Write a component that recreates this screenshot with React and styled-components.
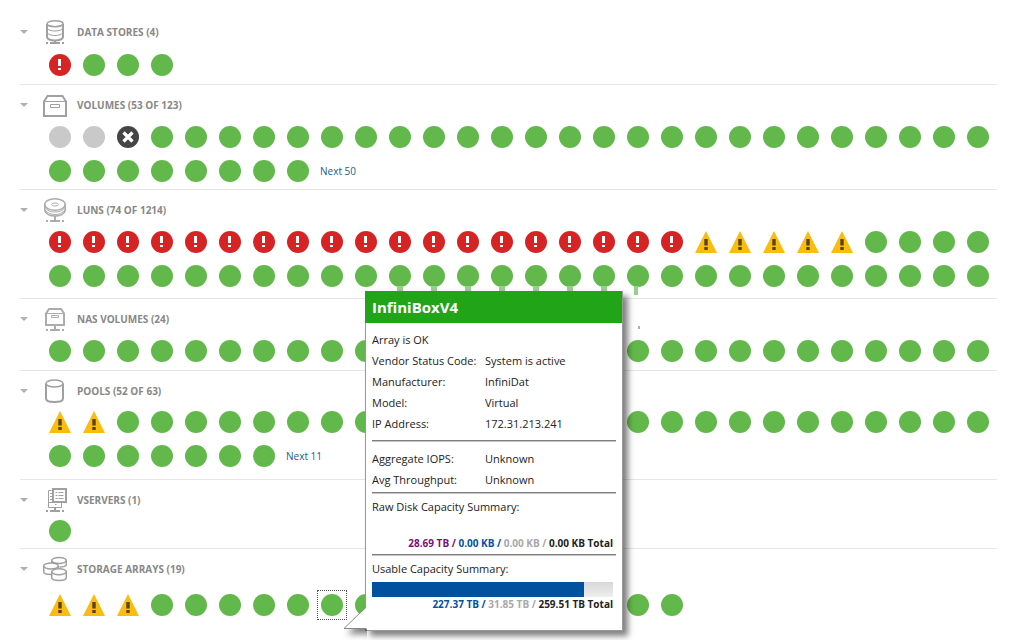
import React, { useState } from "react";
import styled, { createGlobalStyle } from "styled-components";

const GlobalStyle = createGlobalStyle`
  * {
    box-sizing: border-box;
  }
  body {
    margin: 0;
    background: #ffffff;
    color: #222222;
    font-family: "Open Sans", "Noto Sans", sans-serif;
    font-size: 11px;
  }
`;

const Page = styled.main`
  min-height: 100vh;
  padding: 12px 27px 0 20px;
`;

const Section = styled.section`
  padding-bottom: ${(props) => props.$tail}px;
  border-bottom: ${(props) => (props.$last ? "none" : "1px solid #e6e6e6")};
`;

const SectionHeader = styled.header`
  display: flex;
  align-items: center;
  height: 34px;
  padding-top: 6px;
`;

const Toggle = styled.button`
  display: flex;
  width: 23px;
  padding: 0;
  border: none;
  background: none;
  cursor: pointer;
`;

const SectionIcon = styled.svg`
  width: 24px;
  height: 26px;
  margin-right: 10px;
  fill: none;
  stroke: #a0a0a0;
`;

const SectionTitle = styled.h2`
  margin: 0;
  color: #888888;
  font-size: 10px;
  font-weight: 700;
  text-transform: uppercase;
`;

const Tiles = styled.div`
  display: flex;
  flex-wrap: wrap;
  align-items: center;
  padding: ${(props) => props.$lead}px 0 0 23px;
`;

const TileCell = styled.div`
  position: relative;
  display: flex;
  align-items: center;
  justify-content: center;
  width: 34px;
  height: 34px;
`;

const Tile = styled.button`
  display: flex;
  align-items: center;
  justify-content: center;
  width: 30px;
  height: 30px;
  padding: 0;
  border: 1px dotted ${(props) => (props.$selected ? "#555555" : "transparent")};
  background: none;
  cursor: pointer;
`;

const Stem = styled.span`
  position: absolute;
  bottom: ${(props) => (props.$long ? "-2px" : "0")};
  left: ${(props) => (props.$long ? "13px" : "14px")};
  width: ${(props) => (props.$long ? "4px" : "6px")};
  height: ${(props) => (props.$long ? "9px" : "7px")};
  background: #98cf8a;
`;

const Speck = styled.span`
  position: absolute;
  top: -8px;
  left: 17px;
  width: 2px;
  height: 3px;
  background: #b0b0b0;
`;

const NextLink = styled.a`
  margin-left: 5px;
  color: #1a5c8e;
  font-size: 10px;
  text-decoration: none;
`;

const Popup = styled.aside`
  position: absolute;
  bottom: -9px;
  left: 50px;
  z-index: 1;
  width: 258px;
  border: 1px solid #999999;
  border-top: none;
  background: #ffffff;
  box-shadow: 5px 5px 6px rgba(0, 0, 0, 0.5);
`;

const PopupTitle = styled.h3`
  margin: 0 0 0 -1px;
  padding: 0 7px;
  background: #22a418;
  color: #ffffff;
  font-size: 15px;
  line-height: 32px;
`;

const PopupBody = styled.div`
  padding: 6px 6px 18px;
  line-height: 21px;
`;

const Line = styled.p`
  margin: 0;
`;

const Details = styled.dl`
  display: grid;
  grid-template-columns: 113px 1fr;
  margin: 0;

  dd {
    margin: 0;
  }
`;

const Rule = styled.hr`
  height: 2px;
  margin: ${(props) => props.$above}px 0 ${(props) => props.$below}px;
  border: none;
  border-top: 1px solid #808080;
  border-bottom: 1px solid #c4c4c4;
`;

const Meter = styled.div`
  height: 15px;
  margin: 3px 3px 0 0;
  background: linear-gradient(#d8d8d8, #eeeeee);
`;

const MeterFill = styled.div`
  height: 100%;
  background: #00529f;
`;

const Totals = styled.p`
  margin: ${(props) => props.$above}px 3px 0 0;
  font-size: 10px;
  font-weight: 700;
  line-height: 15px;
  text-align: right;
`;

const Amount = styled.span`
  color: ${(props) => props.$color};
`;

const PopupTail = styled.svg`
  position: absolute;
  bottom: 0;
  left: -23px;
  width: 24px;
  height: 24px;
  overflow: visible;
  filter: drop-shadow(4px 5px 3px rgba(0, 0, 0, 0.5));
  clip-path: inset(0 0 -14px -6px);
`;

const icons = {
  datastore: (
    <>
      <ellipse cx="12" cy="4.700" rx="8" ry="3" strokeWidth="1.500" />
      <path d="M4 5V18C4 20 7.500 21.500 12 21.500S20 20 20 18V5" strokeWidth="2" />
      <path d="M4 9C5 11 8 12 12 12S19 11 20 9M4 13.500C5 15.500 8 16.500 12 16.500S19 15.500 20 13.500" />
      <path d="M12 21.500V24M3 24H5M7 24H17M19 24H21" strokeWidth="2" />
    </>
  ),
  volume: (
    <>
      <path d="M1 9.500V24H23V9.500L19.500 4H4.500Z" strokeWidth="2" />
      <path d="M1 9.500H23" strokeWidth="1" />
      <path d="M7.500 12.500H16.500V15.500H7.500Z" />
    </>
  ),
  lun: (
    <g stroke="#acacac">
      <ellipse cx="12" cy="7.500" rx="10.200" ry="5.800" strokeWidth="1.500" />
      <ellipse cx="12" cy="7.500" rx="3.500" ry="1.500" />
      <path d="M1.800 7.500V13.500C2.500 17 7 19 12 19S21.500 17 22.200 13.500V7.500" strokeWidth="1.500" />
      <path d="M2 10.500C4 14 8 15 12 15S20 14 22 10.500M2 13C4 16 8 17.500 12 17.500S20 16 22 13" />
      <path d="M12 19V24M3 24H5M7 24H17M19 24H21" strokeWidth="2" />
    </g>
  ),
  nas: (
    <g stroke="#acacac">
      <path d="M3 7.500V19H21V7.500L18 3H6Z" strokeWidth="2" />
      <path d="M3 7.500H21M8.500 9.500H15.500V11.500H8.500Z" />
      <path d="M12 20V24M3 24H5M7 24H17M19 24H21" strokeWidth="2" />
    </g>
  ),
  pool: (
    <>
      <ellipse cx="11.500" cy="5.500" rx="8.500" ry="3.500" strokeWidth="1.500" />
      <path d="M3 5.500V20.500C3 22.700 6.500 24 11.500 24S20 22.700 20 20.500V5.500" strokeWidth="2" />
    </>
  ),
  vserver: (
    <>
      <path d="M10 2H23V15H10Z" strokeWidth="2" />
      <path d="M12.500 5.500H14.500M15.500 5.500H20.500M12.500 8.500H14.500M15.500 8.500H20.500M12.500 11.500H14.500M15.500 11.500H20.500" />
      <path d="M8.500 3.500H5.500V20.500H18.500V16M7 6.500H9M7 9.500H9M7 12.500H9M6 15.500H9M12 17.500H13.500" />
      <path d="M12 20V24M3 24H5M7 24H17M19 24H21" strokeWidth="2" />
    </>
  ),
  array: (
    <g strokeWidth="1.500">
      <path d="M8.700 7V4.500M23.300 4.500V8.500C23.300 10 20.500 11 16.500 11" />
      <ellipse cx="16" cy="4.500" rx="7.300" ry="3" />
      <ellipse cx="8" cy="10" rx="7.300" ry="3" />
      <path d="M.700 10V15.500C.700 17.500 4 18.500 8 18.500M15.300 10V12" />
      <ellipse cx="16" cy="15.800" rx="7.300" ry="3" />
      <path d="M8.700 15.800V21.500C8.700 23.500 12 24.500 16 24.500S23.300 23.500 23.300 21.500V15.800" />
    </g>
  ),
};

const shapes = {
  ok: <circle cx="11" cy="11" r="11" fill="#63b84b" />,
  unknown: <circle cx="11" cy="11" r="11" fill="#c9c9c9" />,
  error: (
    <>
      <circle cx="11" cy="11" r="11" fill="#d62424" />
      <path d="M9 5H12V12H9ZM9 14H12V16H9Z" fill="#ffffff" />
    </>
  ),
  offline: (
    <>
      <circle cx="11" cy="11" r="11" fill="#454545" />
      <path d="M6.500 6.500L15.500 15.500M15.500 6.500L6.500 15.500" stroke="#ffffff" strokeWidth="3.200" />
    </>
  ),
  warning: (
    <>
      <path d="M11 0L22 22H0Z" fill="#f9bc0f" />
      <path d="M9.300 8H12.700V14.500H9.300ZM9.300 16H12.700V19H9.300Z" fill="#594310" />
    </>
  ),
};

const repeat = (status, n) => Array(n).fill(status);

const sections = [
  {
    title: "Data Stores (4)",
    icon: "datastore",
    lead: 2,
    tail: 2,
    tiles: ["error", ...repeat("ok", 3)],
  },
  {
    title: "Volumes (53 of 123)",
    icon: "volume",
    lead: 1,
    tail: 1,
    tiles: ["unknown", "unknown", "offline", ...repeat("ok", 33)],
    next: "Next 50",
  },
  {
    title: "LUNs (74 of 1214)",
    icon: "lun",
    lead: 1,
    tail: 5,
    tiles: [...repeat("error", 19), ...repeat("warning", 5), ...repeat("ok", 32)],
    stems: [38, 45],
  },
  {
    title: "NAS Volumes (24)",
    icon: "nas",
    lead: 1,
    tail: 2,
    tiles: repeat("ok", 28),
    speck: 17,
  },
  {
    title: "Pools (52 of 63)",
    icon: "pool",
    lead: 0,
    tail: 6,
    tiles: [...repeat("warning", 2), ...repeat("ok", 33)],
    next: "Next 11",
  },
  {
    title: "vServers (1)",
    icon: "vserver",
    lead: 0,
    tail: 0,
    tiles: ["ok"],
  },
  {
    title: "Storage Arrays (19)",
    icon: "array",
    lead: 5,
    tail: 0,
    tiles: [...repeat("warning", 3), ...repeat("ok", 16)],
    selected: 8,
  },
];

const ArrayPopup = () => (
  <Popup>
    <PopupTail viewBox="0 0 24 24">
      <path d="M24 1L1 22.500H24Z" fill="#ffffff" />
      <path d="M22.500 1.500L1 22.500H22.500" fill="none" stroke="#888888" />
    </PopupTail>
    <PopupTitle>InfiniBoxV4</PopupTitle>
    <PopupBody>
      <Line>Array is OK</Line>
      <Details>
        <dt>Vendor Status Code:</dt>
        <dd>System is active</dd>
        <dt>Manufacturer:</dt>
        <dd>InfiniDat</dd>
        <dt>Model:</dt>
        <dd>Virtual</dd>
        <dt>IP Address:</dt>
        <dd>172.31.213.241</dd>
      </Details>
      <Rule $above={6} $below={6} />
      <Details>
        <dt>Aggregate IOPS:</dt>
        <dd>Unknown</dd>
        <dt>Avg Throughput:</dt>
        <dd>Unknown</dd>
      </Details>
      <Rule $above={2} $below={2} />
      <Line>Raw Disk Capacity Summary:</Line>
      <Totals $above={19}>
        <Amount $color="#7a0f7a">28.69 TB / </Amount>
        <Amount $color="#00529f">0.00 KB / </Amount>
        <Amount $color="#a8a8a8">0.00 KB / </Amount>
        0.00 KB Total
      </Totals>
      <Rule $above={3} $below={2} />
      <Line>Usable Capacity Summary:</Line>
      <Meter>
        <MeterFill style={{ width: `${Math.round((227.37 / 259.51) * 100)}%` }} />
      </Meter>
      <Totals $above={0}>
        <Amount $color="#00529f">227.37 TB / </Amount>
        <Amount $color="#a8a8a8">31.85 TB / </Amount>
        259.51 TB Total
      </Totals>
    </PopupBody>
  </Popup>
);

const StatusSection = ({ section, last }) => {
  const [open, setOpen] = useState(true);
  const { title, icon, lead, tail, tiles, next, stems, speck, selected } = section;
  return (
    <Section $tail={tail} $last={last}>
      <SectionHeader>
        <Toggle aria-label={title} aria-expanded={open} onClick={() => setOpen(!open)}>
          <svg width="8" height="4" viewBox="0 0 8 4">
            <path d="M0 0H8L4 4Z" fill="#b0b0b0" />
          </svg>
        </Toggle>
        <SectionIcon viewBox="0 0 24 26">{icons[icon]}</SectionIcon>
        <SectionTitle>{title}</SectionTitle>
      </SectionHeader>
      {open && (
        <Tiles $lead={lead}>
          {tiles.map((status, i) => (
            <TileCell key={i}>
              {stems && i >= stems[0] && i <= stems[1] && <Stem $long={i === stems[1]} />}
              {speck === i && <Speck />}
              <Tile aria-label={status} $selected={selected === i}>
                <svg width="22" height="22" viewBox="0 0 22 22">
                  {shapes[status]}
                </svg>
              </Tile>
              {selected === i && <ArrayPopup />}
            </TileCell>
          ))}
          {next && <NextLink href="#next">{next}</NextLink>}
        </Tiles>
      )}
    </Section>
  );
};

const App = () => (
  <>
    <GlobalStyle />
    <Page>
      {sections.map((section, i) => (
        <StatusSection key={section.title} section={section} last={i === sections.length - 1} />
      ))}
    </Page>
  </>
);

export default App;
